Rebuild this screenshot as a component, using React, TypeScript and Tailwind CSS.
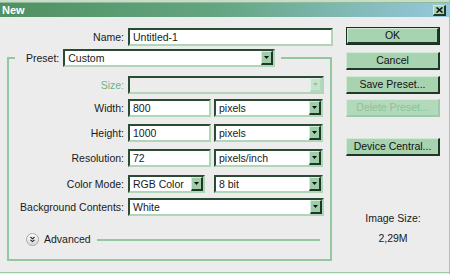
import React from 'react'

const Arrow = ({ disabled }: { disabled?: boolean }) => (
  <span
    className={`flex h-full w-[12px] shrink-0 items-center justify-center border-t border-l border-r-2 border-b-2 ${
      disabled
        ? 'border-t-[#e2f1e5] border-l-[#e2f1e5] border-r-[#b3d9bc] border-b-[#b3d9bc] bg-[#c6e4cd]'
        : 'border-t-[#d2eed8] border-l-[#d2eed8] border-r-[#1d3825] border-b-[#1d3825] bg-[#9fcda9]'
    }`}
  >
    <svg width="5" height="3" viewBox="0 0 5 3">
      <path d="M0 0h5L2.5 3z" fill={disabled ? '#93c49f' : '#111'} />
    </svg>
  </span>
)

const Field = ({ value, className }: { value: string; className: string }) => (
  <div
    className={`flex h-[18px] items-center border-2 border-t-[#2b4a33] border-l-[#2b4a33] border-r-[#aed6b7] border-b-[#aed6b7] bg-white pl-[3px] ${className}`}
  >
    {value}
  </div>
)

const Combo = ({ value, className, disabled }: { value: string; className: string; disabled?: boolean }) => (
  <div
    className={`flex h-[18px] items-stretch border-2 border-t-[#2b4a33] border-l-[#2b4a33] border-r-[#aed6b7] border-b-[#aed6b7] ${
      disabled ? 'bg-[#ececec]' : 'bg-white'
    } ${className}`}
  >
    <span className="flex flex-1 items-center pl-[3px]">{value}</span>
    <Arrow disabled={disabled} />
  </div>
)

const Row = ({ label, className, green, children }: { label: string; className: string; green?: boolean; children: React.ReactNode }) => (
  <div className={`flex items-center ${className}`}>
    <span className={`w-[119px] pr-[4px] text-right ${green ? 'text-[#6fb283]' : ''}`}>{label}</span>
    {children}
  </div>
)

const Btn = ({ label, className, primary, disabled }: { label: string; className: string; primary?: boolean; disabled?: boolean }) => (
  <div
    className={`flex h-[18px] w-[94px] items-center justify-center ${className} ${
      primary ? 'border border-[#1a2e20]' : ''
    }`}
  >
    <div
      className={`flex h-full w-full items-center justify-center border-t border-l border-r-2 border-b-2 ${
        disabled
          ? 'border-t-[#d6ecdb] border-l-[#d6ecdb] border-r-[#9ccaa8] border-b-[#9ccaa8] bg-[#b2d9ba] text-[#8cc39a]'
          : 'border-t-[#d0ead5] border-l-[#d0ead5] border-r-[#1d3825] border-b-[#1d3825] bg-[#a8d3b0] text-[#111]'
      }`}
    >
      {label}
    </div>
  </div>
)

export default function App() {
  return (
    <div className="flex h-[274px] w-[450px] flex-col overflow-hidden border-r border-[#9ccaa6] bg-[#ececec] font-['Liberation_Sans',Arial,sans-serif] text-[10.5px] leading-none text-[#1a1a1a]">
      {/* Title bar */}
      <div className="h-[2px] bg-[#c8ddc9]" />
      <div className="h-[1px] bg-[#8fbb99]" />
      <div className="flex h-[14px] items-center justify-between bg-gradient-to-r from-[#4f9161] via-[#65a683] to-[#97c8de] pl-[2px] pr-[3px]">
        <span className="text-[11px] font-bold text-white">New</span>
        <span className="flex h-[11px] w-[13px] items-center justify-center border-t border-l border-r-2 border-b-2 border-t-[#d0ead5] border-l-[#d0ead5] border-r-[#1d3825] border-b-[#1d3825] bg-[#a8d3b0]">
          <svg width="7" height="6" viewBox="0 0 7 6">
            <path d="M0.5 0.5l6 5M6.5 0.5l-6 5" stroke="#111" strokeWidth="1.6" />
          </svg>
        </span>
      </div>

      {/* Body */}
      <div className="flex h-[255px]">
        <div className="flex w-[346px] flex-col pt-[11px]">
          <div className="flex items-center">
            <span className="w-[128px] pr-[4px] text-right">Name:</span>
            <Field value="Untitled-1" className="w-[205px]" />
          </div>

          <fieldset className="mt-[3px] ml-[7px] w-[325px] border-2 border-[#93c7a0] pb-[13px]">
            <legend className="ml-[6px] flex items-center pr-[6px] pl-[11px]">
              <span className="pr-[4px]">Preset:</span>
              <Combo value="Custom" className="w-[212px]" />
            </legend>

            <Row label="Size:" green className="mt-[9px]">
              <Combo value="" disabled className="w-[196px]" />
            </Row>
            <Row label="Width:" className="mt-[5px]">
              <Field value="800" className="w-[83px]" />
              <Combo value="pixels" className="ml-[3px] w-[109px]" />
            </Row>
            <Row label="Height:" className="mt-[7px]">
              <Field value="1000" className="w-[83px]" />
              <Combo value="pixels" className="ml-[3px] w-[109px]" />
            </Row>
            <Row label="Resolution:" className="mt-[7px]">
              <Field value="72" className="w-[83px]" />
              <Combo value="pixels/inch" className="ml-[3px] w-[109px]" />
            </Row>
            <Row label="Color Mode:" className="mt-[8px]">
              <Combo value="RGB Color" className="w-[77px]" />
              <Combo value="8 bit" className="ml-[9px] w-[109px]" />
            </Row>
            <Row label="Background Contents:" className="mt-[5px]">
              <Combo value="White" className="w-[196px]" />
            </Row>

            <div className="mt-[17px] flex items-center pl-[17px]">
              <svg width="13" height="13" viewBox="0 0 13 13">
                <defs>
                  <linearGradient id="adv" x1="0" y1="0" x2="0" y2="1">
                    <stop offset="0" stopColor="#ffffff" />
                    <stop offset="1" stopColor="#d4d4d4" />
                  </linearGradient>
                </defs>
                <circle cx="6.5" cy="6.5" r="6" fill="url(#adv)" stroke="#a9a9a9" />
                <path d="M4.5 4l2 1.8 2-1.8M4.5 6.8l2 1.8 2-1.8" fill="none" stroke="#222" strokeWidth="1.1" />
              </svg>
              <span className="ml-[5px]">Advanced</span>
              <span className="ml-[6px] h-[2px] w-[223px] bg-[#93c7a0]" />
            </div>
          </fieldset>
        </div>

        <div className="flex flex-1 flex-col pt-[10px]">
          <Btn label="OK" primary className="" />
          <Btn label="Cancel" className="mt-[7px]" />
          <Btn label="Save Preset..." className="mt-[6px]" />
          <Btn label="Delete Preset..." disabled className="mt-[5px]" />
          <Btn label="Device Central..." className="mt-[21px]" />
          <div className="mt-[57px] w-[94px] text-center">Image Size:</div>
          <div className="mt-[9px] w-[94px] text-center">2,29M</div>
        </div>
      </div>
      <div className="h-[1px] bg-[#9ccaa6]" />
    </div>
  )
}
